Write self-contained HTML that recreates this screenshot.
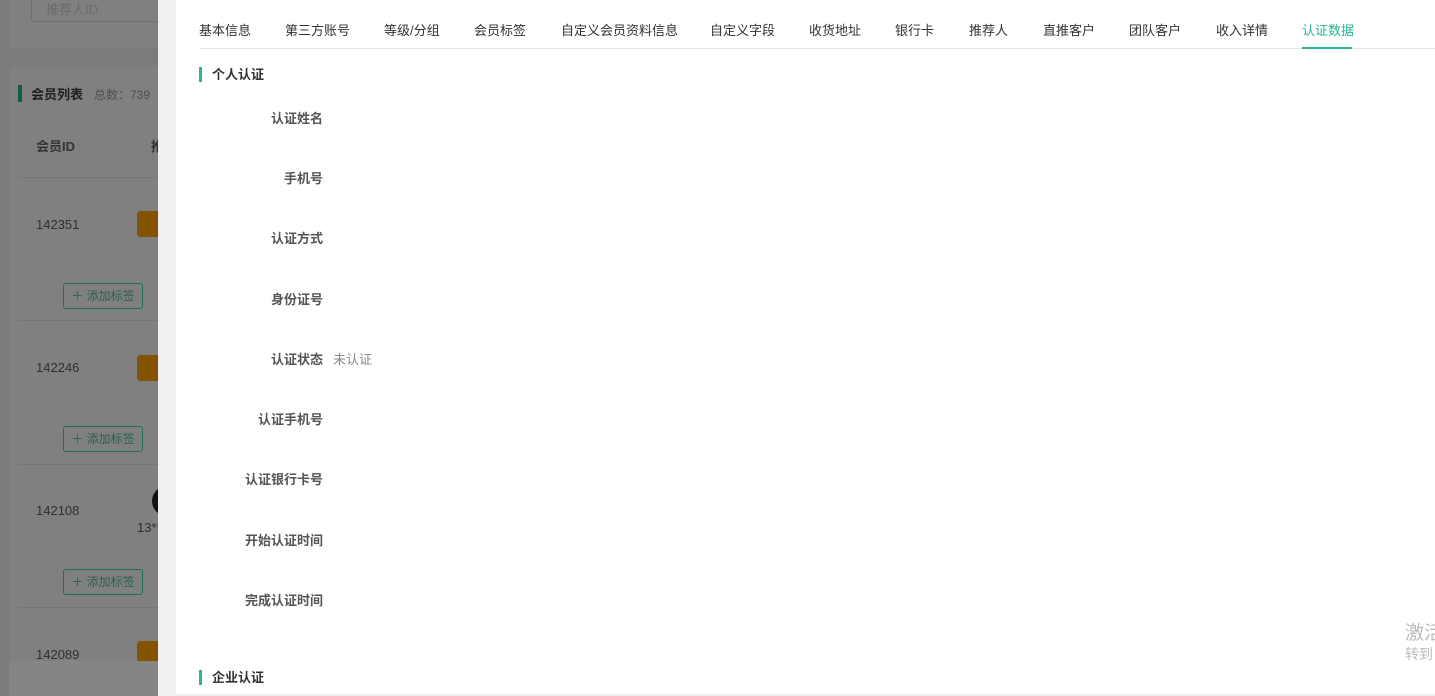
<!DOCTYPE html>
<html><head><meta charset="utf-8"><style>
*{margin:0;padding:0;box-sizing:border-box}
html{width:1435px;height:696px;overflow:hidden;background:#f0f0f2}
body{width:1435px;height:696px;overflow:hidden;position:relative;background:#7b7b7c;font-family:"Liberation Sans","Noto Sans CJK SC",sans-serif;font-size:13px}
.abs{position:absolute;white-space:nowrap}
.card{position:absolute;background:#808080;border-radius:4px}
.tag{position:absolute;left:63px;width:80px;height:26px;border:1px solid #1f6e5a;border-radius:3px;color:#2a5f52;font-size:12px;line-height:24px;text-align:center}
.org{position:absolute;left:137px;width:30px;height:26px;background:#845300;border-radius:3px}
.hr{position:absolute;left:18px;width:150px;height:1px;background:#767676}
.id{position:absolute;left:36px;color:#2e2e2e;font-size:13px}
.drawer{position:absolute;left:158px;top:0;width:1277px;height:696px;background:#f0f0f2}
.main{position:absolute;left:176px;top:0;width:1259px;height:694px;background:#fff}
.tab{position:absolute;top:20px;color:#333;font-size:13px}
.lab{position:absolute;right:1112px;font-weight:bold;color:#555;font-size:13px;white-space:nowrap}
.sec{position:absolute;left:199px;font-weight:bold;color:#333;font-size:13px;padding-left:10px;border-left:3px solid #2bb596;line-height:15px}
</style></head><body>
<div class="card" style="left:9px;top:-10px;width:160px;height:58px"></div>
<div class="abs" style="left:31px;top:-10px;width:140px;height:32px;border:1px solid #6e6e6e;border-radius:3px;color:#6a6a6a;padding:8px 0 0 14px">推荐人ID</div>
<div class="card" style="left:9px;top:67px;width:160px;height:600px"></div>
<div class="abs" style="left:18px;top:85px;width:4px;height:17px;background:#145c4a"></div>
<div class="abs" style="left:31px;top:84px;font-weight:bold;color:#1e1e1e">会员列表</div>
<div class="abs" style="left:94px;top:86px;color:#4e4e4e;font-size:12px">总数：739</div>
<div class="abs" style="left:36px;top:136px;font-weight:bold;color:#333">会员ID</div>
<div class="abs" style="left:151px;top:136px;font-weight:bold;color:#333">推</div>
<div class="hr" style="top:177px"></div>
<div class="id" style="top:217px">142351</div><div class="org" style="top:211px"></div>
<div class="tag" style="top:283px">＋ 添加标签</div>
<div class="hr" style="top:320px"></div>
<div class="id" style="top:360px">142246</div><div class="org" style="top:355px"></div>
<div class="tag" style="top:426px">＋ 添加标签</div>
<div class="hr" style="top:464px"></div>
<div class="id" style="top:503px">142108</div>
<div class="abs" style="left:152px;top:486px;width:30px;height:30px;border-radius:50%;background:#111"></div>
<div class="abs" style="left:137px;top:520px;color:#2e2e2e">13**</div>
<div class="tag" style="top:569px">＋ 添加标签</div>
<div class="hr" style="top:607px"></div>
<div class="id" style="top:647px">142089</div><div class="org" style="top:641px"></div>
<div class="abs" style="left:9px;top:661px;width:160px;height:40px;background:#858585"></div>

<div class="drawer"></div>
<div class="main"></div>
<div class="abs" style="left:199px;top:48px;width:1236px;height:1px;background:#e4e7ed"></div>
<div class="tab" style="left:199px">基本信息</div>
<div class="tab" style="left:285px">第三方账号</div>
<div class="tab" style="left:384px">等级/分组</div>
<div class="tab" style="left:474px">会员标签</div>
<div class="tab" style="left:561px">自定义会员资料信息</div>
<div class="tab" style="left:710px">自定义字段</div>
<div class="tab" style="left:809px">收货地址</div>
<div class="tab" style="left:895px">银行卡</div>
<div class="tab" style="left:969px">推荐人</div>
<div class="tab" style="left:1043px">直推客户</div>
<div class="tab" style="left:1129px">团队客户</div>
<div class="tab" style="left:1216px">收入详情</div>
<div class="tab" style="left:1302px;color:#2bb596">认证数据</div>
<div class="abs" style="left:1302px;top:47px;width:50px;height:2px;background:#2bb596"></div>

<div class="sec" style="top:67px">个人认证</div>
<div class="lab" style="top:108px">认证姓名</div>
<div class="lab" style="top:168px">手机号</div>
<div class="lab" style="top:228px">认证方式</div>
<div class="lab" style="top:289px">身份证号</div>
<div class="lab" style="top:349px">认证状态</div>
<div class="abs" style="left:333px;top:349px;color:#888">未认证</div>
<div class="lab" style="top:409px">认证手机号</div>
<div class="lab" style="top:469px">认证银行卡号</div>
<div class="lab" style="top:530px">开始认证时间</div>
<div class="lab" style="top:590px">完成认证时间</div>
<div class="sec" style="top:670px">企业认证</div>
<div class="abs" style="left:1405px;top:618px;color:#bbb;font-size:19px">激活</div>
<div class="abs" style="left:1405px;top:644px;color:#bbb;font-size:14px">转到</div>
</body></html>
